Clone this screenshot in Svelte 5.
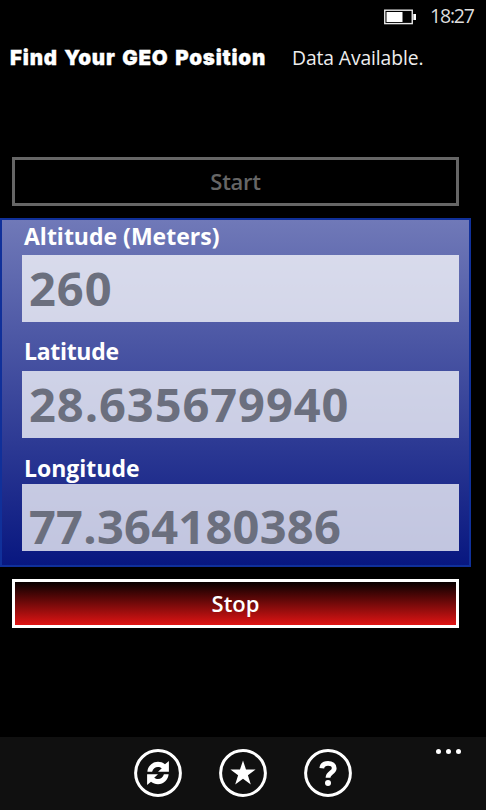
<script>
  const readings = [
    { id: 'altitude', label: 'Altitude (Meters)', value: '260' },
    { id: 'latitude', label: 'Latitude', value: '28.635679940' },
    { id: 'longitude', label: 'Longitude', value: '77.364180386' },
  ];

  let running = $state(true);
</script>

<main class="phone">
  <div class="status-bar">
    <svg class="battery" width="33" height="16" viewBox="0 0 33 16">
      <rect x="0.75" y="1.2" width="27.5" height="13.4" fill="none" stroke="#e8e8e8" stroke-width="1.4" />
      <rect x="2.5" y="3" width="16" height="10" fill="#fff" />
      <rect x="29.3" y="5" width="2.7" height="6" fill="#fff" />
    </svg>
    <span class="clock">18:27</span>
  </div>

  <header class="title-row">
    <h1>Find Your GEO Position</h1>
    <span class="state">Data Available.</span>
  </header>

  <button class="btn start" disabled={running} onclick={() => (running = true)}>
    <span>Start</span>
  </button>

  <section class="panel">
    {#each readings as r (r.id)}
      <div class="reading {r.id}">
        <span class="label">{r.label}</span>
        <div class="field"><span>{r.value}</span></div>
      </div>
    {/each}
  </section>

  <button class="btn stop" onclick={() => (running = false)}>
    <span>Stop</span>
  </button>

  <footer class="app-bar">
    <button class="round" aria-label="refresh">
      <svg width="48" height="48" viewBox="0 0 48 48">
        <circle cx="24" cy="24" r="22.4" />
        <path d="M13.4 22.7C13.7 17.2 18.4 12.800 24 12.800c2.7 0 5.1.9 7 2.500l3.900-3.400v10.800H24l3.800-3.500c-1.200-.9-2.400-1.200-3.800-1.200-2.900 0-5 1.700-5.900 4.700z" />
        <path d="M34.600 25.300C34.300 30.800 29.600 35.200 24 35.200c-2.700 0-5.100-.9-7-2.500l-3.900 3.400V25.300H24l-3.800 3.500c1.200.9 2.400 1.200 3.800 1.200 2.900 0 5-1.700 5.900-4.700z" />
      </svg>
    </button>
    <button class="round" aria-label="favorite">
      <svg width="48" height="48" viewBox="0 0 48 48">
        <circle cx="24" cy="24" r="22.4" />
        <path d="M24 11.500l3 9.100h9.600l-7.700 5.600 2.900 9.200L24 29.800l-7.800 5.600 2.900-9.200-7.700-5.600H21z" />
      </svg>
    </button>
    <button class="round" aria-label="help">
      <svg width="48" height="48" viewBox="0 0 48 48">
        <circle cx="24" cy="24" r="22.4" />
        <path class="hook" d="M17.800 19.200c.4-3.200 2.700-4.800 6.200-4.800 3.800 0 6.200 1.700 6.200 4.800 0 4.600-6.200 4.400-6.200 9.600" />
        <circle class="dot" cx="24" cy="34" r="3" />
      </svg>
    </button>
    <button class="more" aria-label="more">
      <i></i><i></i><i></i>
    </button>
  </footer>
</main>

<style>
  :global(body) {
    margin: 0;
    background: #000;
  }

  .phone {
    display: flex;
    flex-direction: column;
    width: 486px;
    height: 810px;
    overflow: hidden;
    background: #000;
    color: #fff;
    font-family: 'Open Sans', 'Noto Sans', sans-serif;
  }

  button {
    margin: 0;
    padding: 0;
    background: none;
    border: none;
    font-family: inherit;
    color: inherit;
  }

  .status-bar {
    display: flex;
    justify-content: flex-end;
    height: 32px;
    padding-right: 11px;
    box-sizing: border-box;
  }

  .battery {
    margin: 9px 13px 0 0;
  }

  .clock {
    width: 45px;
    font-size: 19.5px;
    line-height: 32px;
    letter-spacing: -1.2px;
    color: #ddd;
  }

  .title-row {
    display: flex;
    align-items: baseline;
    height: 125px;
    padding-left: 10px;
    box-sizing: border-box;
    white-space: nowrap;
  }

  h1 {
    width: 282px;
    margin: 0;
    font: 900 20.5px/52px Inter, sans-serif;
    letter-spacing: 0.8px;
    word-spacing: 1.7px;
    -webkit-text-stroke: 0.3px #fff;
  }

  .state {
    font-size: 19.3px;
    line-height: 52px;
    letter-spacing: -0.1px;
    color: #eee;
  }

  /* ── Buttons ── */

  .btn {
    flex: none;
    width: 447px;
    height: 49px;
    margin-left: 12px;
    border: 3px solid #fff;
    font-size: 22px;
    font-weight: 600;
    line-height: 43px;
  }

  .start:disabled {
    border-color: #666;
    color: #666;
    letter-spacing: -0.3px;
  }

  .stop {
    margin-top: 12px;
    background: linear-gradient(#080000, #e01414);
  }

  /* ── Readings ── */

  .panel {
    flex: none;
    width: 471px;
    height: 349px;
    margin-top: 12px;
    padding: 0 10px 0 20px;
    border: 2px solid #10309a;
    box-sizing: border-box;
    background: linear-gradient(#7079b8, #081780);
  }

  .reading {
    display: flex;
    flex-direction: column;
  }

  .label {
    height: 35px;
    padding-left: 2px;
    font-size: 23px;
    font-weight: 700;
    line-height: 32px;
  }

  .latitude .label,
  .longitude .label {
    padding-top: 14px;
  }

  .latitude .label {
    line-height: 31px;
    letter-spacing: -0.3px;
  }

  .longitude .label {
    height: 32px;
    line-height: 33px;
  }

  .field {
    height: 67px;
    padding-left: 7px;
    background: rgba(255, 255, 255, 0.75);
    color: #6b6f7e;
    font-size: 47px;
    font-weight: 700;
    line-height: 67px;
    letter-spacing: 0.95px;
  }

  .longitude .field {
    line-height: 84px;
    letter-spacing: 0.25px;
  }

  /* ── App bar ── */

  .app-bar {
    display: grid;
    grid-template-columns: 48px 48px 48px 1fr;
    column-gap: 37px;
    height: 73px;
    margin-top: auto;
    padding: 12px 25px 0 134px;
    box-sizing: border-box;
    background: #101010;
  }

  .round,
  .round svg {
    display: block;
    width: 48px;
    height: 48px;
  }

  .round svg {
    fill: #fff;
  }

  .round circle {
    fill: none;
    stroke: #fff;
    stroke-width: 3;
  }

  .round .hook {
    fill: none;
    stroke: #fff;
    stroke-width: 4.8;
  }

  .round .dot {
    fill: #fff;
    stroke: none;
  }

  .more {
    display: flex;
    gap: 5px;
    justify-self: end;
    align-self: start;
  }

  .more i {
    width: 5px;
    height: 5px;
    border-radius: 50%;
    background: #fff;
  }
</style>
